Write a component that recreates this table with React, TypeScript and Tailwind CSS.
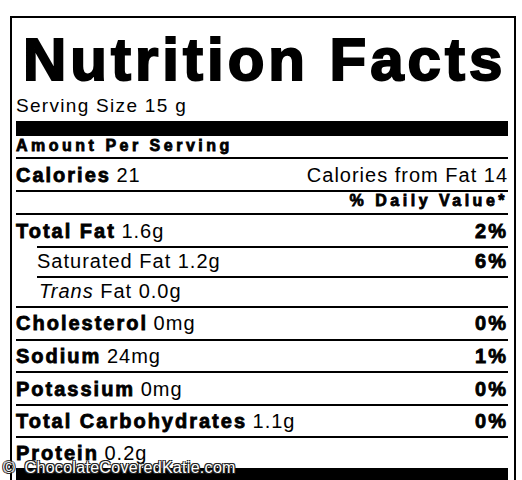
const sans = "font-['Liberation_Sans',Arial,sans-serif]";
const heavy = "font-bold [-webkit-text-stroke:0.8px_#000]";

type Line = {
  label: string;
  amount: string;
  dv?: string;
  pad: string;
};

const lines: Line[] = [
  { label: "Cholesterol", amount: "0mg", dv: "0%", pad: "pt-[5px] pb-[6px]" },
  { label: "Sodium", amount: "24mg", dv: "1%", pad: "pt-[5px] pb-[5px]" },
  { label: "Potassium", amount: "0mg", dv: "0%", pad: "pt-[6px] pb-[5px]" },
  { label: "Total Carbohydrates", amount: "1.1g", dv: "0%", pad: "pt-[5px] pb-[5px]" },
  { label: "Protein", amount: "0.2g", pad: "pt-[5px] pb-[5px]" },
];

function Row({ label, amount, dv, pad }: Line) {
  return (
    <div className={`flex justify-between border-t-2 border-black text-[20px] leading-none ${pad}`}>
      <span className="whitespace-nowrap">
        <span className={`${heavy} tracking-[2px]`}>{label}</span>{" "}
        <span className="tracking-[1px]">{amount}</span>
      </span>
      {dv && <span className={`${heavy} tracking-[2px]`}>{dv}</span>}
    </div>
  );
}

export default function App() {
  return (
    <div className={`relative h-[480px] w-[522px] overflow-hidden bg-white text-black ${sans}`}>
      <div className="ml-[10px] mt-[16px] w-[506px] border-2 border-black pl-[4px] pr-[6px] pt-[12px]">
        <h1 className="whitespace-nowrap pl-[7px] text-[60px] font-bold leading-none tracking-[4px] [-webkit-text-stroke:2px_#000]">
          Nutrition Facts
        </h1>
        <div className="mt-[6px] text-[19px] leading-none tracking-[1.3px]">Serving Size 15 g</div>
        <div className="mt-[6px] h-[15px] bg-black" />

        <div className="border-b-2 border-black pb-[3px] pt-[2px] text-[16px] leading-none">
          <span className={`${heavy} tracking-[3.5px]`}>Amount Per Serving</span>
        </div>

        <div className="flex justify-between border-b-2 border-black pb-[5px] pt-[6px] text-[20px] leading-none">
          <span>
            <span className={`${heavy} tracking-[2px]`}>Calories</span>{" "}
            <span className="tracking-[1px]">21</span>
          </span>
          <span className="tracking-[1px]">Calories from Fat 14</span>
        </div>

        <div className="flex justify-end border-b-2 border-black pb-[4px] pt-[1px] text-[16px] leading-none">
          <span className={`${heavy} tracking-[3.5px]`}>% Daily Value*</span>
        </div>

        <div className="flex justify-between pb-[5px] pt-[6px] text-[20px] leading-none">
          <span>
            <span className={`${heavy} tracking-[2px]`}>Total Fat</span>{" "}
            <span className="tracking-[1px]">1.6g</span>
          </span>
          <span className={`${heavy} tracking-[2px]`}>2%</span>
        </div>

        <div className="ml-[21px] flex justify-between border-t-2 border-black pb-[5px] pt-[3px] text-[20px] leading-none">
          <span className="tracking-[1px]">Saturated Fat 1.2g</span>
          <span className={`${heavy} tracking-[2px]`}>6%</span>
        </div>

        <div className="ml-[21px] border-t-2 border-black pb-[5px] pl-[2px] pt-[3px] text-[20px] leading-none tracking-[1px]">
          <span className="italic">Trans</span> Fat 0.0g
        </div>

        {lines.map((l) => (
          <Row key={l.label} {...l} />
        ))}

        <div className="h-[15px] bg-black" />
        <div className="h-[20px]" />
      </div>

      <div className="absolute left-[3px] top-[460px] whitespace-nowrap text-[16px] leading-none tracking-[0.3px] text-white [text-shadow:-1px_-1px_0_#222,1px_-1px_0_#222,-1px_1px_0_#222,1px_1px_0_#222]">
        ©&nbsp; ChocolateCoveredKatie.com
      </div>
    </div>
  );
}
